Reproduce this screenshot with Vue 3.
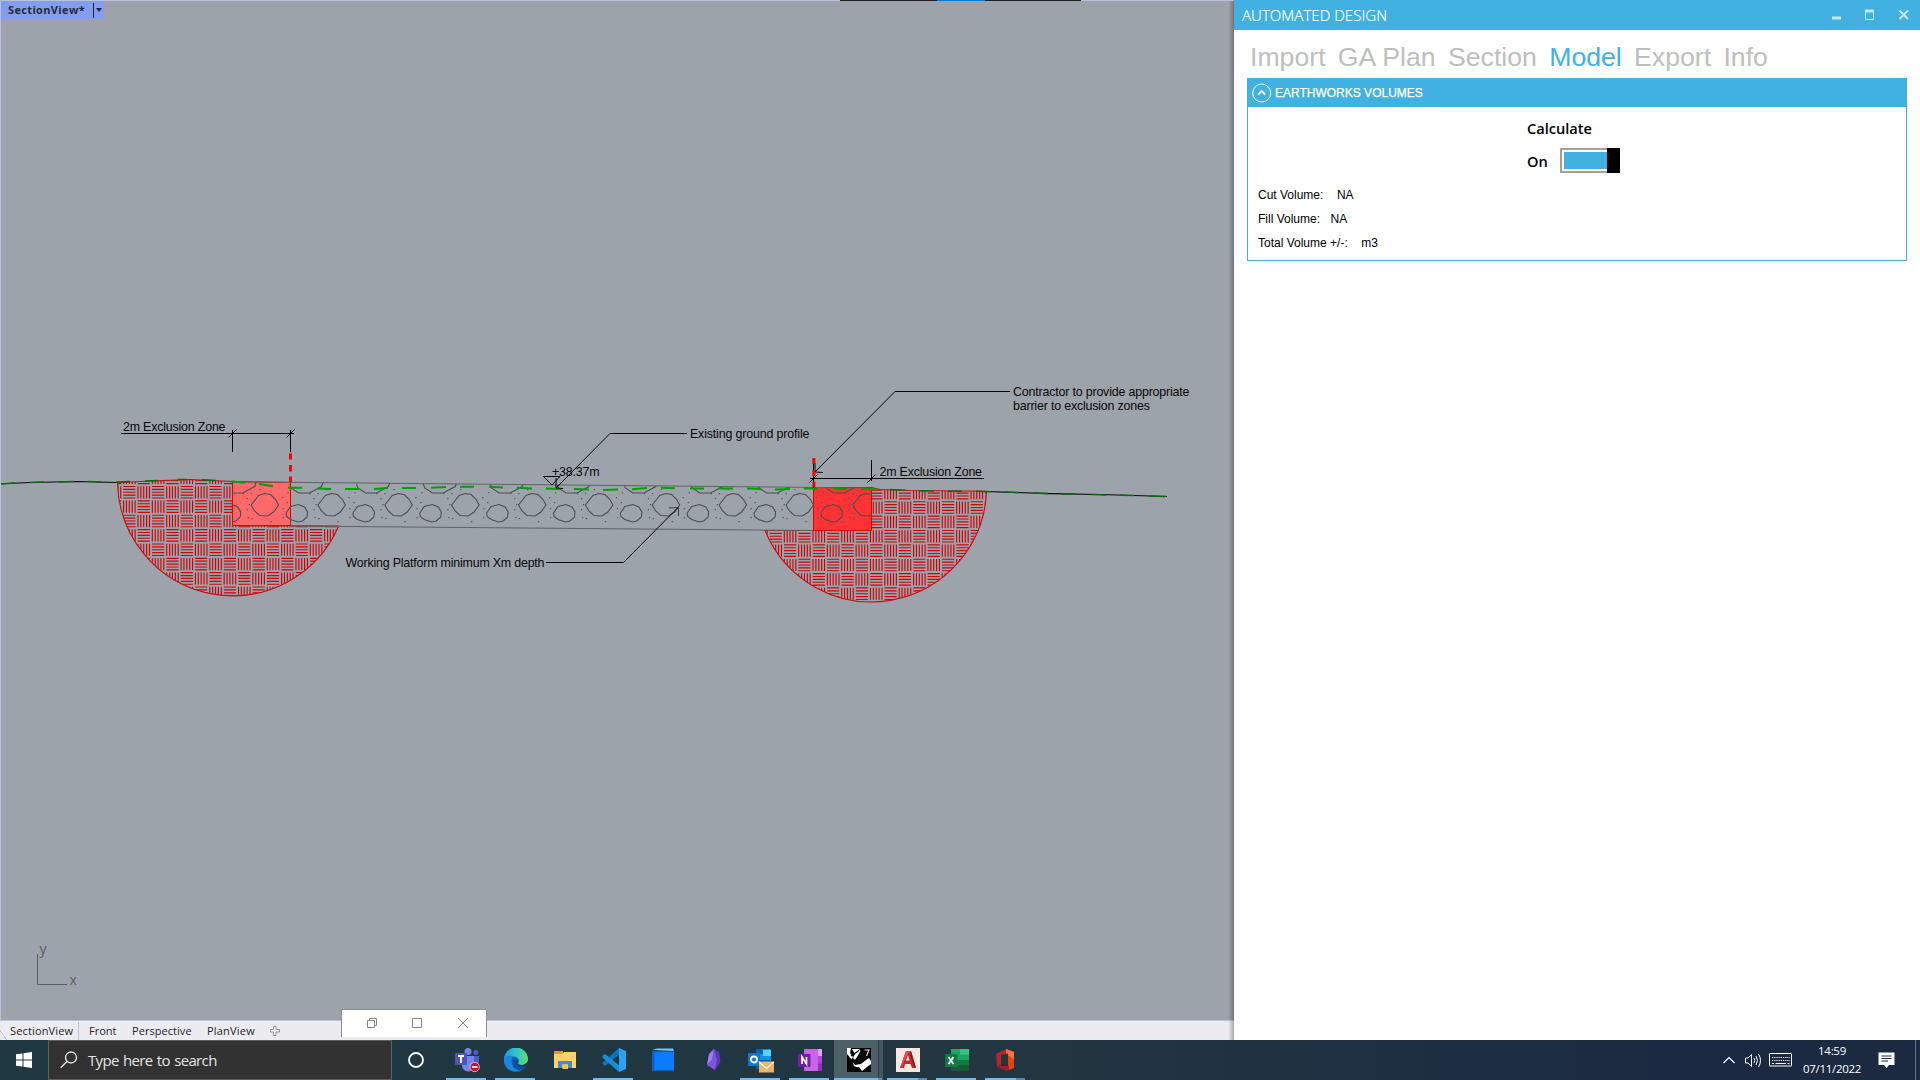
<script setup>
const stones = Array.from({ length: 11 }, (_, i) => 197.7 + i * 66.86)
const dots = [
  [17, -8], [23, -13], [45, -12], [49, -7], [53, -12], [18, 3], [22, -3], [49, 4], [51, -1], [6, 16], [-13, 13], [18, 12], [50, 12], [-5, -16]
]

// Basket-weave earth hatch: alternating blocks of five strokes
const PITCH = 14.363
const weave = (x0, y0, c0, c1) => {
  let d = ''
  for (let r = -1; r < 9; r++) {
    for (let c = c0; c < c1; c++) {
      const x = x0 + c * PITCH
      const y = y0 + r * PITCH
      for (let k = 0; k < 5; k++) {
        const o = 0.3 + k * 2.88
        d += (r + c) % 2 === 0
          ? `M${x.toFixed(2)} ${(y + o).toFixed(2)}h12.2`
          : `M${(x + o).toFixed(2)} ${y.toFixed(2)}v12.2`
      }
    }
  }
  return d
}
const leftWeave = weave(123.3, 486.2, -1, 16)
const rightWeave = weave(123.3, 487.1, 44, 61)

const tabs = ['Import', 'GA Plan', 'Section', 'Model', 'Export', 'Info']
const views = ['SectionView', 'Front', 'Perspective', 'PlanView']
const volumes = [
  { label: 'Cut Volume:', value: 'NA', gap: 13.5 },
  { label: 'Fill Volume:', value: 'NA', gap: 10.5 },
  { label: 'Total Volume +/-:', value: 'm3', gap: 13.5 }
]
</script>

<template>
  <div class="screen">
    <main class="work">
      <section class="cad">
        <div class="viewport">
          <svg class="drawing" width="1234" height="1020" viewBox="0 0 1234 1020">
            <defs>
              <clipPath id="platform"><path d="M232.5 481.8L290 482.3L872 488V530.5L290 526L232.5 525.3Z" /></clipPath>
              <clipPath id="soil-left"><path d="M117.5 482.7L150 481L190 479.5L232.5 481.5V525.5L338.7 526A115.3 115.3 0 0 1 117.5 482.7Z" /></clipPath>
              <clipPath id="soil-right"><path d="M871.5 487.5L880 489.5L910 490.5L986.5 491.3A115.1 115.1 0 0 1 765 530.5H871.5Z" /></clipPath>
            </defs>

            <g fill="none" stroke="#d20005" stroke-width="1.15">
              <path :d="leftWeave" clip-path="url(#soil-left)" />
              <path :d="rightWeave" clip-path="url(#soil-right)" />
            </g>
            <g fill="none" stroke="#cc0a10" stroke-width="1.1">
              <path d="M117.5 482.7L150 481L190 479.5L232.5 481.5V525.5L338.7 526A115.3 115.3 0 0 1 117.5 482.7Z" />
              <path d="M871.5 487.5L880 489.5L910 490.5L986.5 491.3A115.1 115.1 0 0 1 765 530.5H871.5Z" />
            </g>
            <path d="M232.5 481.5L290.5 482.5V525.5H232.5Z" fill="#ff6969" stroke="#e60000" />
            <path d="M813.5 487.5H871.5V530.5H813.5Z" fill="#ff3333" stroke="#e60000" />
            <path d="M232.5 481.8L290 482.3L872 488M290 526L813 530.5" fill="none" stroke="#5f6265" />

            <g clip-path="url(#platform)" fill="none" stroke="#4c4f51" stroke-width="1.1">
              <g v-for="x in stones" :key="x" :transform="`translate(${x} 505)`">
                <path d="M-13.5 0L-6 -9.5L0 -11.5L6 -10.5L11 -5.5L14 0L9 7L3 11L-5 10.5L-10 6Z" />
                <path d="M21.5 8L26 1.5L34 -.5L40 2L43 7L42.5 12L38 16L33.5 17L26 14.5L22 11.5Z" />
                <path d="M25 -21L26.5 -17L34 -12H45L57 -18.5L58.5 -23" />
                <rect v-for="(d, i) in dots" :key="i" :x="d[0]" :y="d[1]" width="1.2" height="1.2" fill="#505457" stroke="none" />
              </g>
            </g>

            <path d="M1 483.7L30 482.5L77 481.5L117 482.5" fill="none" stroke="#080808" stroke-width="1.1" />
            <path d="M987 491.5L1050 493.7L1100 494.5L1167 496.5" fill="none" stroke="#080808" stroke-width="1.2" />
            <path d="M1 483.9L15 483M30 482.5L44 482M59 482L73 481.5M88 481.5L102 482M116 482L130 481.5M145 481L158 480.5M178 479.5H187M202 479.8L216 480.5" fill="none" stroke="#0b6b10" stroke-width="1.5" />
            <path d="M231 481.4L245 482.4M259 484L273 486.3M288 487.7H302M317 488.5L331 489M345 489H359M374 489L388 488M402 488H416M431 487.8L446 487M460 486.7H474M489 486.7L503 487.5M517 487.8L532 488.4M546 488.5L560 488.9M574 489L589 489.5M603 490L618 489.6M632 489.2L647 488M661 487.8L675 488.2M690 488.5H704M718 488.5H733M747 488.5L761 489M775 489.5L790 489M804 488.4H818M833 488.5L847 489M862 489L877 489.2" fill="none" stroke="#00a008" stroke-width="2" />
            <path d="M890 489.5L905 490.2M919 490.7L934 491M948 491.2H962M976 491.2L991 491.7M1005 492L1019 492.6M1034 493L1048 493.6M1062 494L1076 494.3M1091 494.5L1106 495M1120 495.2L1134 495.5M1149 496L1166 496.5" fill="none" stroke="#0a6b10" stroke-width="1.6" />

            <g fill="none" stroke="#050505">
              <path d="M121 433.5H294M232.5 430V452M290.5 430V452M228.5 437.5L236.5 429.5M286.5 437.5L294.5 429.5" />
              <path d="M810 478.5H984M813.5 460V488M871.5 460V481M809.5 482.5L817.5 474.5M867.5 482.5L875.5 474.5" />
              <path d="M687 433.5H610L556 488M556 478V488L563 488.5" />
              <path d="M543.5 476.5H560L552 485Z" />
              <path d="M546 562.5H623.5L678 507.5" />
              <path d="M669 508L678.5 507.5V516" stroke="#3c3f41" />
              <path d="M1010 391.5H895L815 472M815 463V472L823 472.5" />
            </g>
            <path d="M290.5 453.5V459.5M290.5 465V471.5M290.5 476.5V482M813.9 458V464M813.9 470V476M813.9 481.5V487.5" stroke="#f00" stroke-width="3" />

            <g class="notes">
              <text x="123" y="430.5" textLength="102.5">2m Exclusion Zone</text>
              <text x="879.5" y="475.5" textLength="102.5">2m Exclusion Zone</text>
              <text x="690" y="438.4" textLength="119.5">Existing ground profile</text>
              <text x="1013" y="396" textLength="176.5">Contractor to provide appropriate</text>
              <text x="1013" y="409.7" textLength="137">barrier to exclusion zones</text>
              <text x="345.5" y="567" textLength="199">Working Platform minimum Xm depth</text>
              <text x="552" y="476" textLength="47.5">+38.37m</text>
            </g>
            <path d="M37.5 954V984.5H67" fill="none" stroke="#5b5e61" />
            <g class="axis"><text x="39.5" y="954">y</text><text x="69.5" y="985">x</text></g>
          </svg>
          <div class="view-name"><span>SectionView*</span><i></i><b></b></div>
        </div>
        <div class="edge-strip"><span></span></div>
        <div class="view-tabs">
          <span v-for="v in views" :key="v" class="view-tab" :class="v.toLowerCase()">{{ v }}</span>
          <svg width="10" height="10" viewBox="0 0 10 10"><path d="M3.5 .5H6V3.5H9.5V6H6V9.5H3.5V6H.5V3.5H3.5Z" fill="#f4f4f6" stroke="#929298" /></svg>
        </div>
        <div class="float">
          <svg width="10" height="10" viewBox="0 0 10 10"><path d="M.5 2.5H7.5V9.5H.5ZM2.5 2.5V.5H9.5V7.5H7.5" /></svg>
          <svg width="10" height="10" viewBox="0 0 10 10"><path d="M.5 .5H9.5V9.5H.5Z" /></svg>
          <svg width="10" height="10" viewBox="0 0 10 10"><path d="M0 0L10 10M10 0L0 10" /></svg>
        </div>
      </section>

      <aside class="panel">
        <header class="title">
          <h1>AUTOMATED DESIGN</h1>
          <svg width="78" height="12" viewBox="0 0 78 12" fill="none" stroke="#c5e7f5">
            <path d="M0 9H9" stroke-width="3" />
            <path d="M33.5 1V10.5H41.5V1" /><path d="M33 2H42" stroke-width="3" />
            <path d="M67.5 1.5L76 10M76 1.5L67.5 10" stroke-width="2" />
          </svg>
        </header>
        <nav class="tabs"><a v-for="t in tabs" :key="t" :class="{ on: t === 'Model' }">{{ t }}</a></nav>
        <section class="group">
          <header>
            <svg width="20" height="20" viewBox="0 0 20 20" fill="none" stroke="#fff"><circle cx="9.7" cy="10" r="9" /><path d="M6.2 11.5L9.7 8L13.2 11.5" stroke-width="1.8" /></svg>
            <span>EARTHWORKS VOLUMES</span>
          </header>
          <div class="body">
            <div class="calc">
              <label>Calculate</label>
              <div class="switch-row"><span>On</span><div class="switch"><i></i><b></b></div></div>
            </div>
            <div v-for="r in volumes" :key="r.label" class="volume">
              <span>{{ r.label }}</span><span :style="{ marginLeft: r.gap + 'px' }">{{ r.value }}</span>
            </div>
          </div>
        </section>
      </aside>
    </main>

    <footer class="taskbar">
      <div class="start"><svg width="16" height="16" viewBox="0 0 16 16" fill="#fff"><path d="M0 2.3L6.5 1.4V7.5H0ZM7.5 1.2L16 0V7.5H7.5ZM0 8.5H6.5V14.6L0 13.7ZM7.5 8.5H16V16L7.5 14.8Z" /></svg></div>
      <div class="search">
        <svg width="18" height="18" viewBox="0 0 18 18" fill="none" stroke="#e8e8e8" stroke-width="1.3"><circle cx="11" cy="6.5" r="5.5" /><path d="M7 10.5L.7 16.8" /></svg>
        <span>Type here to search</span>
      </div>
      <div class="app cortana"><svg width="24" height="24" viewBox="0 0 24 24"><circle cx="12" cy="12" r="7" fill="none" stroke="#fff" stroke-width="1.8" /></svg></div>
      <div class="app run">
        <svg width="26" height="26" viewBox="0 0 26 26">
          <circle cx="14" cy="4.5" r="3.5" fill="#7b83eb" /><circle cx="21.8" cy="5.5" r="2.5" fill="#5059c9" />
          <path d="M18 9H25V16A4 4 0 0 1 18 19Z" fill="#5059c9" /><path d="M8 9H20V18A6 6 0 0 1 8 19Z" fill="#7b83eb" />
          <rect x="1" y="6" width="12" height="12" rx="1" fill="#4b53bc" /><path d="M4 9H10M7 9V16" stroke="#fff" stroke-width="1.8" />
          <circle cx="20.7" cy="20" r="4.7" fill="#c4142e" stroke="#f0dfe5" stroke-width=".7" /><path d="M18 20H23.5" stroke="#fff" stroke-width="1.6" />
        </svg>
      </div>
      <div class="app run">
        <svg width="24" height="24" viewBox="0 0 24 24">
          <defs><linearGradient id="edge-top"><stop stop-color="#1c97dc" /><stop offset=".5" stop-color="#31c3d2" /><stop offset="1" stop-color="#62e05b" /></linearGradient></defs>
          <circle cx="12" cy="12" r="12" fill="#0b67b8" />
          <path d="M0 12A12 12 0 0 1 24 11C24 15 21 17 17.5 17C14 17 13.2 15.5 14.5 14C16 11 13 8.5 9 8.5C4 8.5 0 12 0 16Z" fill="url(#edge-top)" />
          <path d="M0 12C1 8 5 6.5 9 8.5C6 11 7 20 15 22.5C8 26 0 20 0 12Z" fill="#1686df" />
          <path d="M14.5 14C12.5 16.5 16 20 22.5 17.5C20 22 15 23 11 20.5C8 18 8 14 10 11.5C12 10.5 15 11 14.5 14Z" fill="#0c4f9c" />
          <path d="M14.5 14C12.7 16 15 19 20 18.6L24.5 17V12C23 16 19 17.5 17 17C14.5 16.5 13.7 15.5 14.5 14Z" fill="#203740" />
        </svg>
      </div>
      <div class="app">
        <svg width="24" height="24" viewBox="0 0 24 24"><path d="M1 3H10V6H1Z" fill="#e09b13" /><path d="M1 6L9 6L11 4H23V20H1Z" fill="#ffd363" /><path d="M5 20V13H19V20H15V16.5H9.5V20Z" fill="#3f8ed0" /><path d="M9.5 16.5H15V21H9.5Z" fill="#f8c445" /></svg>
      </div>
      <div class="app run">
        <svg width="24" height="24" viewBox="0 0 24 24"><path d="M17 0V7L3 18L.5 16V14.8Z" fill="#0877bd" /><path d="M17 24V17L3 6L.5 8V9.5Z" fill="#1690d6" /><path d="M17 0L24 3V21L17 24Z" fill="#29a3ef" /><path d="M17 7V17L10.5 12Z" fill="#203740" /></svg>
      </div>
      <div class="app">
        <svg width="24" height="24" viewBox="0 0 24 24"><path d="M1 2L6 .5H22L23 3Z" fill="#7cc0ff" /><path d="M1 3.5H23V22.5H1Z" fill="#0a7cff" /><path d="M1 3L3.5 3.5V22.5H1Z" fill="#0d5fd0" /></svg>
      </div>
      <div class="app gem">
        <svg width="24" height="24" viewBox="0 0 24 24"><path d="M12 1L17 4L18.5 14L13 22L5 17L7 6Z" fill="#5b35b5" /><path d="M12 1L7 6L5 17L10 12Z" fill="#9d7ff0" /><path d="M10 12L12 1L15 12L13 22L5 17Z" fill="#7b55dc" /></svg>
      </div>
      <div class="app run">
        <svg width="26" height="26" viewBox="0 0 26 26"><path d="M8 2H23V14H8Z" fill="#1490df" /><path d="M15 3H23V9H15Z" fill="#50d9ff" /><path d="M8 2H15V7H8Z" fill="#0a64b5" /><path d="M8 13H22V22H8Z" fill="#0c5aa8" /><rect y="6" width="12" height="13" rx="1" fill="#0b78d4" /><circle cx="6" cy="12.5" r="3" fill="none" stroke="#fff" stroke-width="1.9" /><path d="M11 14.5H26V25.5H11Z" fill="#ecb36b" /><path d="M11 15L18.5 21.5L26 15" fill="none" stroke="#fff7e7" stroke-width="1.3" /></svg>
      </div>
      <div class="app run">
        <svg width="24" height="24" viewBox="0 0 24 24"><rect x="6" y="1" width="18" height="22" rx="1" fill="#ca64ea" /><path d="M20 1H24V8H20Z" fill="#e3a0f6" /><path d="M20 8H24V15.5H20Z" fill="#ae4bd5" /><path d="M20 15.5H24V23H20Z" fill="#9332bf" /><rect y="6" width="12.5" height="13" rx="1" fill="#7719aa" /><path d="M4 16V9L8.5 16V9" fill="none" stroke="#fff" stroke-width="1.7" /></svg>
      </div>
      <div class="app run active">
        <svg width="24" height="24" viewBox="0 0 24 24">
          <path d="M0 0H24V24H0Z" fill="#050505" />
          <path d="M0 0H4L3 5L6 9L4 12L8 17L14 16L19 12L22 10L24 13V16L20 19L15 23L12 19L8 20L3 17L0 12Z" fill="#fff" />
          <path d="M5 1H12L13.500 3L10 9L8 12L6 10L8 6Z" fill="#fff" />
          <path d="M0 6L5 12L7 18L12 20L13 24H0Z" fill="#050505" />
          <path d="M4 8L12 2.5M5 13L11 12L13 15" fill="none" stroke="#050505" stroke-width="1.3" />
          <path d="M17.5 2H22L19.5 8" fill="none" stroke="#e8e8e8" stroke-width="1.1" />
        </svg>
      </div>
      <div class="app run wide">
        <svg width="24" height="24" viewBox="0 0 24 24"><path d="M0 0H24V24H0Z" fill="#f7e8e1" /><path d="M4 20L10 3H15L20 20H16L14.5 16H9L8 20ZM10 12.5H13.5L12 7Z" fill="#c42a30" fill-rule="evenodd" /><path d="M10 3L4 20L6 18L12 5L15 3Z" fill="#e15153" /><path d="M15 3L20 20L18 19L14 7Z" fill="#881b24" /></svg>
      </div>
      <div class="app run">
        <svg width="24" height="24" viewBox="0 0 24 24"><path d="M6 1H24V23H6Z" fill="#21a366" /><path d="M15 1H24V6.5H15Z" fill="#33c481" /><path d="M6 12H15V17H6ZM15 12H24V17H15Z" fill="#107c41" /><path d="M6 17H24V23H6Z" fill="#185c37" /><rect y="6" width="12.5" height="13" rx="1" fill="#107c41" /><path d="M3.5 9L8.5 16M8.5 9L3.5 16" stroke="#fff" stroke-width="1.8" /></svg>
      </div>
      <div class="app run wide">
        <svg class="office" width="24" height="24" viewBox="0 0 24 24"><path d="M13 1L21 4V20L13 23Z" fill="#e24409" /><path d="M3 6L13 1V6L8 8V17L4 19Z" fill="#b62429" /><path d="M13 1L21 4V11L13 6Z" fill="#ff7044" /><path d="M4 19L8 17.5H16V22L13 23Z" fill="#a51c25" /><path d="M8 7L15 5.5V18H8Z" fill="#203740" /></svg>
      </div>
      <div class="tray">
        <svg width="14" height="8" viewBox="0 0 14 8" fill="none" stroke="#fff" stroke-width="1.2"><path d="M1.5 7L7 1.5L12.5 7" /></svg>
        <svg class="sound" width="17" height="15" viewBox="0 0 17 15" fill="none" stroke="#fff"><path d="M.5 5H3L6.5 1.5V13.5L3 10H.5ZM9 5Q10.5 7.5 9 10M11 3Q14 7.5 11 12M13.5 1Q17.5 7.5 13.5 14" /></svg>
        <svg class="keys" width="24" height="14" viewBox="0 0 24 14" fill="none" stroke="#fff"><rect x=".5" y=".5" width="22" height="12.5" rx=".5" /><path d="M3 4.5H21M3 7.5H21" stroke-dasharray="1.2 1" /><path d="M3 10.5H5M6.5 10.5H17M18.5 10.5H20.5" /></svg>
        <div class="clock"><span>14:59</span><span>07/11/2022</span></div>
        <svg class="note" width="17" height="17" viewBox="0 0 17 17"><path d="M.5 .5H16.5V13H11L8.5 16L6 13H.5Z" fill="#fff" /><path d="M3.5 4H13.5M3.5 6.5H13.5M3.5 9H10" stroke="#1b2941" /></svg>
        <i class="desk"></i>
      </div>
    </footer>
  </div>
</template>

<style>
html, body { margin: 0; overflow: hidden; }
</style>

<style scoped>
* { box-sizing: border-box; }
.screen { width: 1920px; height: 1080px; display: flex; flex-direction: column; overflow: hidden; font-family: "Open Sans", "Noto Sans", sans-serif; }
svg { display: block; flex: none; }
.work { display: flex; height: 1040px; }
.cad { position: relative; width: 1234px; height: 1040px; display: flex; flex-direction: column; background: #ebebf0; }
.cad::after { content: ""; position: absolute; right: 0; top: 1px; bottom: 0; width: 6px; background: linear-gradient(to right, transparent, rgba(0, 0, 0, .28)); }
.viewport { position: relative; height: 1021px; background: #9da3ab; border: solid #b9c1dc; border-width: 1px 0 1px 1px; overflow: hidden; }
.drawing { margin: -1px 0 0 -1px; }
.notes text { font: 12.4px "Liberation Sans", Arial, sans-serif; fill: #080808; }
.axis text { font: 14px "Open Sans", sans-serif; fill: #5b5e61; }
.view-name { position: absolute; left: 0; top: 0; width: 103px; height: 18px; display: flex; align-items: center; background: #859dee; color: #252b3c; font-size: 11px; font-weight: 700; }
.view-name span { width: 92px; padding-left: 7px; letter-spacing: .35px; line-height: 18px; }
.view-name i { flex: none; width: 1px; height: 15px; background: #22283a; }
.view-name b { margin-left: 2px; border: solid transparent; border-width: 4px 3.5px 0; border-top-color: #22283a; }
.edge-strip { position: absolute; top: 0; left: 840px; width: 241px; height: 1px; background: #211f22; display: flex; justify-content: center; }
.edge-strip span { width: 48px; background: #0878d7; }
.view-tabs { display: flex; height: 19px; align-items: center; color: #26262b; font-size: 11px; line-height: 18px; }
.view-tab { padding-top: 1px; white-space: nowrap; }
.sectionview { flex: none; width: 79px; height: 18px; line-height: 17px; padding: 0 0 0 10px; letter-spacing: .15px; border-right: 1px solid #b8c3df; background: linear-gradient(55deg, #ebebf0 5px, #b8c3df 5px, #b8c3df 6px, transparent 6px); }
.front { width: 53px; padding-left: 10px; }
.perspective { width: 75px; letter-spacing: .05px; }
.planview { width: 63px; letter-spacing: .2px; }
.float { position: absolute; left: 341px; top: 1009px; width: 146px; height: 28px; display: flex; gap: 35px; padding: 8px 0 0 25px; background: #fff; border: 1px solid #8b8e94; border-bottom: 0; }
.float svg { fill: none; stroke: #858585; }
.float svg:last-child { margin-left: 1px; }
.panel { width: 686px; background: #fff; }
.title { height: 30px; display: flex; align-items: center; justify-content: space-between; padding: 0 10px 0 8px; background: #41b1e1; color: #fff; }
.title h1 { margin: 0; font-size: 15px; font-weight: 300; line-height: 28px; letter-spacing: .05px; -webkit-text-stroke: .2px #fff; }
.tabs { display: flex; gap: 12.3px; height: 48px; padding: 12px 0 0 16px; font: 26.67px/31px "Liberation Sans", Arial, sans-serif; color: #bebebe; white-space: nowrap; }
.tabs .on { color: #41b1e1; }
.group { margin-left: 13px; width: 660px; height: 183px; border: 1px solid #41b1e1; font-family: "Liberation Sans", Arial, sans-serif; }
.group header { display: flex; align-items: center; gap: 3px; height: 28px; padding-left: 4px; background: #41b1e1; color: #fff; font-size: 12px; font-weight: 400; }
.group header span { -webkit-text-stroke: .25px #fff; }
.body { padding: 12px 0 0 10px; color: #000; }
.calc { margin-left: 269px; height: 64px; font: 600 14.6px/18px "Open Sans", sans-serif; }
.calc label { display: block; height: 28px; }
.switch-row { display: flex; align-items: center; height: 25px; width: 93px; justify-content: space-between; margin-top: 1px; }
.switch-row span { padding-top: 1px; }
.switch { display: flex; width: 60px; height: 25px; border: 2px solid #a7a092; border-right: 0; padding: 2px 0 2px 2px; }
.switch i { flex: 1; background: #41b1e1; }
.switch b { width: 13px; margin: -4px 0; background: #000; }
.volume { display: flex; height: 24px; align-items: center; font-size: 12px; line-height: 14px; white-space: pre; }
.taskbar { display: flex; height: 40px; background: linear-gradient(to right, #203841 0, #213641 1050px, #1b2942 1700px, #1b2941); color: #fff; }
.start { width: 48px; display: flex; align-items: center; justify-content: center; }
.search { width: 344px; height: 40px; display: flex; align-items: center; gap: 10px; padding-left: 11px; background: #323232; border: 1px solid #606060; color: #e3e3e3; font-size: 15px; font-weight: 400; white-space: nowrap; }
.search span { letter-spacing: -.65px; word-spacing: 1px; }
.app { position: relative; width: 49px; height: 40px; display: flex; align-items: center; justify-content: center; }
.cortana { width: 48px; margin-right: 2px; }
.gem svg { margin-left: 4px; }
.office { margin-right: 2px; }
.run::after { content: ""; position: absolute; left: 4px; bottom: 0; width: 40px; height: 2px; background: #76b9ed; }
.active { background: linear-gradient(to right, #4c6067 44px, #263c46 44px, #263c46 45px, #44575f 45px); }
.active::after { left: 0; width: 48px; background: linear-gradient(to right, #76b9ed 44px, #5c91bb 44px); }
.wide::after { background: linear-gradient(to right, #76b9ed 31px, #5588b2 31px); }
.tray { margin-left: auto; width: 198px; display: flex; align-items: center; }
.sound { margin-left: 9px; }
.keys { margin-left: 7px; }
.clock { width: 78px; display: flex; flex-direction: column; align-items: center; font-size: 11.5px; line-height: 18px; letter-spacing: -.3px; }
.note { margin-left: 7px; }
.desk { width: 1px; height: 40px; margin-left: auto; margin-right: 4px; background: #68718a; }
</style>
